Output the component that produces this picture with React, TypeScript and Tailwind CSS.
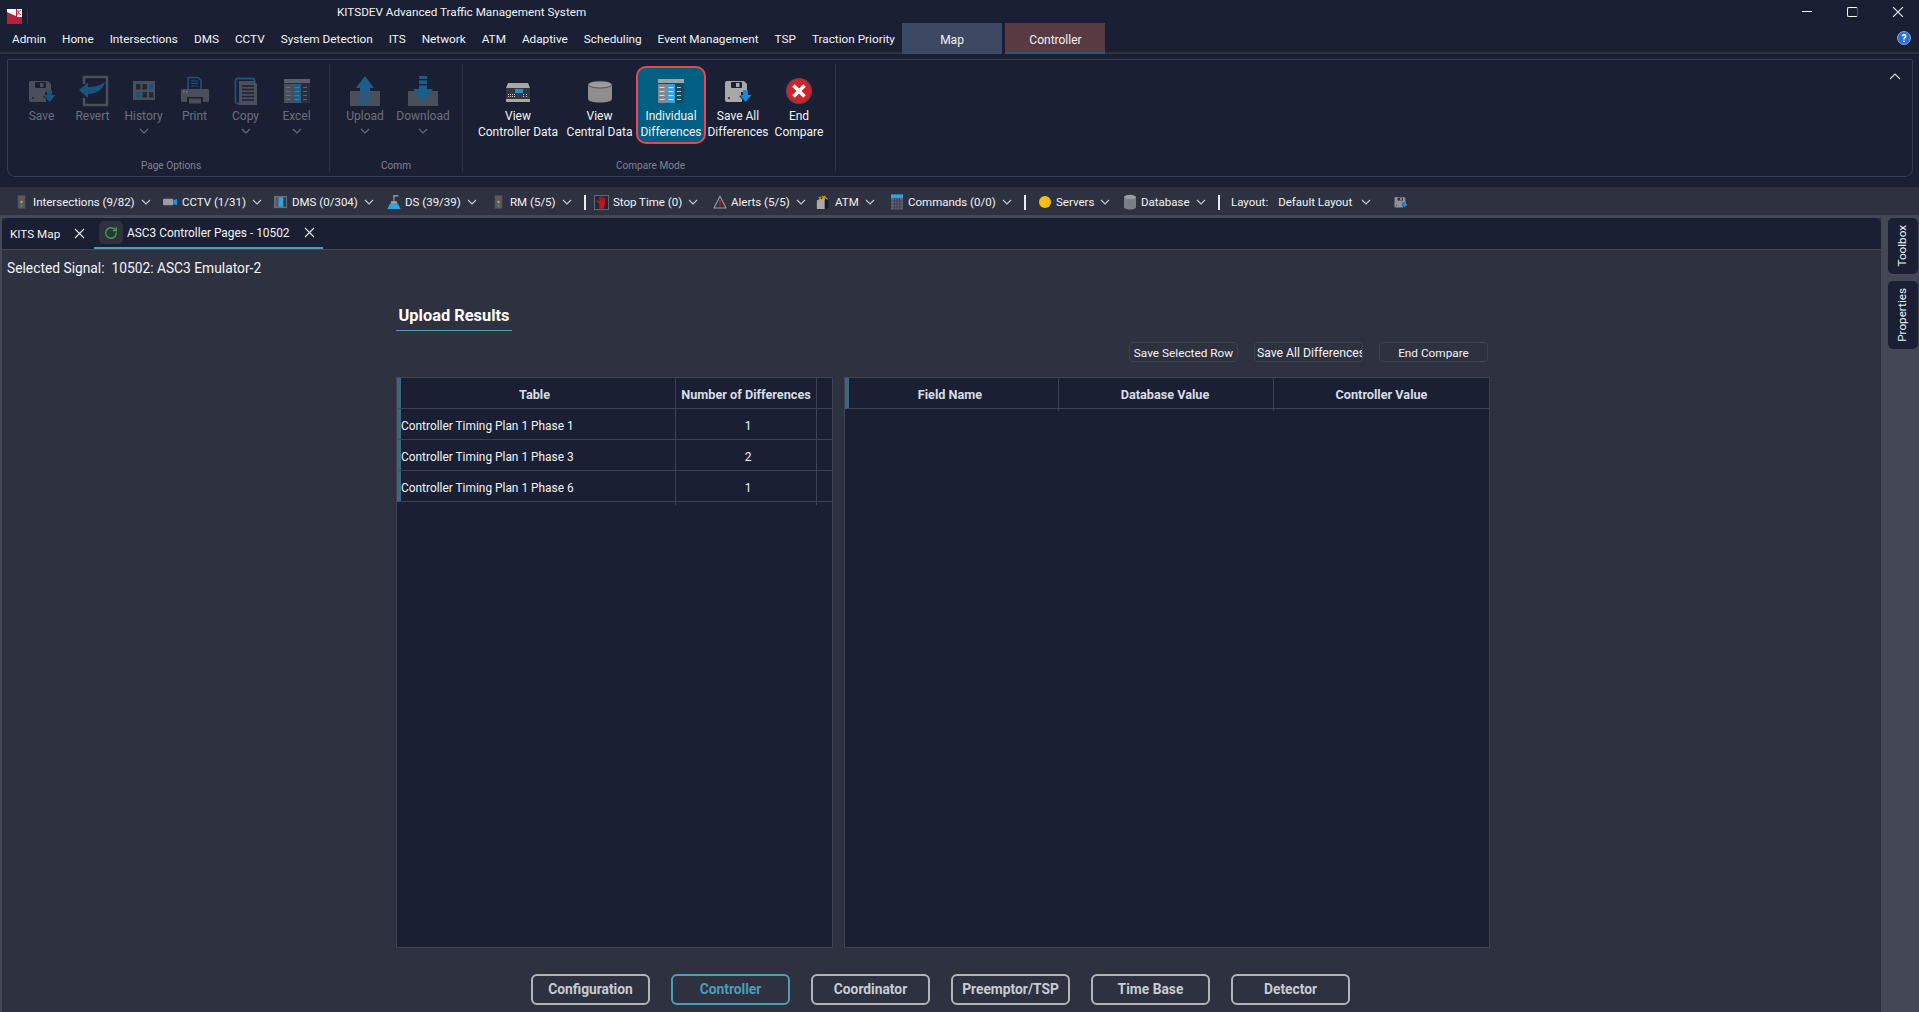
import React from "react";
import { RotateCw } from "lucide-react";

const G = "#4b4e5b";
const B = "#17557f";
const D = "#1a1f33";

function Chev({ color = "#c9ccd4", className = "" }: { color?: string; className?: string }) {
  return (
    <svg width="10" height="6" viewBox="0 0 10 6" className={className}>
      <path d="M1 1l4 4 4-4" fill="none" stroke={color} strokeWidth="1.1" />
    </svg>
  );
}

function Cross({ size = 11 }: { size?: number }) {
  return (
    <svg width={size} height={size} viewBox="0 0 11 11">
      <path d="M1 1l9 9M10 1l-9 9" stroke="#e6e8ee" strokeWidth="1.1" />
    </svg>
  );
}

function Floppy({ body, arrow, slot, size = 32 }: { body: string; arrow: string; slot: string; size?: number }) {
  return (
    <svg width={size} height={size} viewBox="0 0 32 32">
      <path d="M5 6h17l3 3v8h-6v4h-2l3 3v3H5a2 2 0 0 1-2-2V8a2 2 0 0 1 2-2z" fill={body} />
      <rect x="9" y="7" width="11" height="6" rx="1" fill={slot} />
      <rect x="14" y="8" width="3.5" height="4" fill={body} />
      <circle cx="7" cy="23" r="1" fill={slot} />
      <path d="M21 15h5v5h3.5l-6 7-6-7H21z" fill={arrow} />
    </svg>
  );
}

function Revert() {
  return (
    <svg width="32" height="32" viewBox="0 0 32 32">
      <path d="M7 9V2h23v28H7v-7" fill="none" stroke={G} strokeWidth="2.5" />
      <path d="M2 15l9-7.5V12c6 0 12-1 17-5-2 8-9 12-17 12v4z" fill={B} />
    </svg>
  );
}

function History() {
  const cells = [
    ["#23273a", 8, 9],
    ["#23273a", 14.5, 9],
    [B, 21, 9],
    [B, 8, 17],
    ["#23273a", 14.5, 17],
    ["#23273a", 21, 17],
  ] as const;
  return (
    <svg width="32" height="32" viewBox="0 0 32 32">
      <rect x="5" y="6" width="22" height="19" fill={G} />
      {cells.map((c, i) => (
        <rect key={i} x={c[1]} y={c[2]} width="4.5" height="5.5" fill={c[0]} />
      ))}
    </svg>
  );
}

function Print() {
  return (
    <svg width="32" height="32" viewBox="0 0 32 32">
      <path d="M9 14V2.5h10l3 3V14" fill="none" stroke={B} strokeWidth="1.6" />
      <path d="M12 6h7M12 8.5h7M12 11h7" stroke={B} strokeWidth="1.1" />
      <rect x="2" y="14" width="28" height="13" rx="1.5" fill={G} />
      <rect x="8" y="22" width="16" height="8" fill={D} />
      <rect x="10" y="23.5" width="12" height="5" fill={G} />
      <rect x="4" y="16" width="1.5" height="1.5" fill="#7a7d88" />
      <rect x="7" y="16" width="1.5" height="1.5" fill="#7a7d88" />
    </svg>
  );
}

function Copy() {
  return (
    <svg width="32" height="32" viewBox="0 0 32 32">
      <rect x="5.5" y="3.5" width="19" height="25" rx="2" fill="none" stroke={B} strokeWidth="1.8" />
      <path d="M9 6h15l3 3v21H9z" fill={G} />
      <path d="M12 11h12M12 14.5h12M12 18h12M12 21.5h12M12 25h12" stroke={D} strokeWidth="1.3" />
    </svg>
  );
}

function Table({ top, body, mid, right, line }: { top: string; body: string; mid: string; right: string; line: string }) {
  return (
    <svg width="32" height="32" viewBox="0 0 32 32">
      <rect x="3" y="4" width="26" height="4" fill={top} />
      <rect x="3" y="8" width="26" height="1" fill={right} />
      <rect x="3" y="9" width="9" height="19" fill={body} />
      <rect x="12" y="9" width="8" height="19" fill={mid} />
      <rect x="20" y="9" width="9" height="19" fill={right} />
      {[12, 16, 20, 24].map((y) => (
        <g key={y}>
          <rect x="4.5" y={y} width="5" height="1" fill={line} />
          <rect x="13.5" y={y} width="5" height="1.2" fill={line} />
          <rect x="22" y={y} width="4" height="0.8" fill={line} />
        </g>
      ))}
    </svg>
  );
}

function Upload() {
  return (
    <svg width="32" height="32" viewBox="0 0 32 32">
      <rect x="1" y="16" width="30" height="15" fill={G} />
      <path d="M16 1l9 12h-4v15H11V13H7z" fill="#1a5f8c" />
      <rect x="11" y="18" width="10" height="1.3" fill={G} />
      <rect x="11" y="23" width="10" height="1.3" fill={G} />
    </svg>
  );
}

function Download() {
  return (
    <svg width="32" height="32" viewBox="0 0 32 32">
      <rect x="1" y="16" width="30" height="15" fill={G} />
      <path d="M12 1h8v13h6l-10 13L6 14h6z" fill="#1a5f8c" />
      <rect x="12" y="4" width="8" height="1.3" fill={D} />
      <rect x="12" y="9" width="8" height="1.3" fill={D} />
    </svg>
  );
}

function ControllerIcon() {
  return (
    <svg width="32" height="32" viewBox="0 0 32 32">
      <path d="M6 8h20l2 5H4z" fill="#a8a8a8" />
      <rect x="4" y="13" width="24" height="11" fill="#33363f" />
      <rect x="13" y="14" width="8" height="4" fill="#1f8fe0" />
      {[6, 8, 10, 12, 21, 24].map((x) => (
        <g key={x}>
          <rect x={x} y="19" width="1" height="1" fill="#c8c8c8" />
          <rect x={x} y="21" width="1" height="1" fill="#c8c8c8" />
        </g>
      ))}
      <rect x="4" y="24" width="24" height="3" fill="#a8a8a8" />
    </svg>
  );
}

function Cylinder() {
  return (
    <svg width="32" height="32" viewBox="0 0 32 32">
      <path d="M4 10v14c0 2 5 3.5 12 3.5s12-1.5 12-3.5V10z" fill="#8e8e8e" />
      <ellipse cx="16" cy="9.5" rx="12" ry="3.5" fill="#9c9c9c" stroke="#33363f" strokeWidth="0.7" />
    </svg>
  );
}

function EndIcon() {
  return (
    <svg width="32" height="32" viewBox="0 0 32 32">
      <circle cx="16" cy="16" r="12.5" fill="#d3212c" stroke="#4b4e5b" strokeWidth="1.2" />
      <path d="M10.5 10.5l11 11M21.5 10.5l-11 11" stroke="#fff" strokeWidth="3.6" />
    </svg>
  );
}

function Light() {
  return (
    <svg width="16" height="16" viewBox="0 0 16 16">
      <rect x="4" y="1" width="8" height="14" fill="#555864" />
      <circle cx="8" cy="4" r="1.4" fill="#b23a32" />
      <circle cx="8" cy="8" r="1.4" fill="#c9a227" />
      <circle cx="8" cy="12" r="1.4" fill="#3e8e4a" />
    </svg>
  );
}

function Cam() {
  return (
    <svg width="16" height="16" viewBox="0 0 16 16">
      <rect x="0" y="4.5" width="11" height="7" rx="1" fill="#9a9ca3" />
      <path d="M11 6l4-1.5v7L11 10z" fill="#1f8fe0" />
    </svg>
  );
}

function Dms() {
  return (
    <svg width="16" height="16" viewBox="0 0 16 16">
      <rect x="1" y="1.5" width="14" height="13" fill="#6a6d78" />
      <rect x="3" y="3" width="3" height="10" fill="#555864" />
      <rect x="6" y="3" width="5" height="10" fill="#2ba4e6" />
      <rect x="11" y="3" width="3" height="10" fill="#3a3d4a" />
    </svg>
  );
}

function Ds() {
  return (
    <svg width="17" height="17" viewBox="0 0 17 17">
      <path d="M8 1h6M9 1v6" stroke="#a8a8a8" strokeWidth="1.2" fill="none" />
      <path d="M6 7h6l1 3H5z" fill="#a8a8a8" />
      <path d="M4.5 10h9l3 6h-15z" fill="#2ba4e6" />
    </svg>
  );
}

function Hand() {
  return (
    <svg width="17" height="17" viewBox="0 0 17 17">
      <rect x="0.5" y="0.5" width="16" height="16" fill="#23273a" stroke="#6a6d78" />
      <path d="M6 15.5V10L2.5 7l.8-1L6 7.5V2h1.2l.3 5V1h1.2l.3 6 .7-5.5h1.2L10.5 7l1-3.5h1.1L12.5 10 11 15.5z" fill="#c01818" />
    </svg>
  );
}

function Alert() {
  return (
    <svg width="14" height="14" viewBox="0 0 14 14">
      <path d="M7 1.2L13 13H1z" fill="none" stroke="#9a9ca3" strokeWidth="1.1" />
      <path d="M7 5v4.5" stroke="#d3212c" strokeWidth="1.4" />
      <circle cx="7" cy="11" r="0.8" fill="#d3212c" />
    </svg>
  );
}

function Atm() {
  return (
    <svg width="17" height="17" viewBox="0 0 17 17">
      <path d="M1 6l9-2v12H1z" fill="#a8a8a8" />
      <path d="M10 4l4 2v9l-4 1z" fill="#16181f" />
      <path d="M3 2l3 4M6 2L3 6M7 1l3 4M10 1L7 5M10 2l3 3" stroke="#d9a520" strokeWidth="1.2" />
    </svg>
  );
}

function Calc() {
  return (
    <svg width="14" height="16" viewBox="0 0 14 16">
      <rect x="1" y="0.5" width="12" height="15" fill="#5d6070" />
      <rect x="1" y="0.5" width="12" height="3.5" fill="#2ba4e6" />
      <path d="M4.5 4v11.5M7 4v11.5M9.5 4v11.5M1 7h12M1 10h12M1 13h12" stroke="#33363f" strokeWidth="0.6" />
    </svg>
  );
}

function Db() {
  return (
    <svg width="14" height="16" viewBox="0 0 14 16">
      <path d="M1 3v10c0 1.4 2.6 2.5 6 2.5s6-1.1 6-2.5V3z" fill="#7c7e86" />
      <ellipse cx="7" cy="3" rx="6" ry="2.2" fill="#9a9ca3" />
    </svg>
  );
}

function RibbonBtn({ w, icon, lines, off, drop }: { w: string; icon: React.ReactNode; lines: string[]; off?: boolean; drop?: boolean }) {
  return (
    <div className={`${w} flex flex-col items-center pt-[11px]`}>
      {icon}
      <div className={`mt-[0.5px] whitespace-nowrap text-center text-[12px] leading-[16px] ${off ? "text-[#6c6f7b]" : "text-[#f2f3f5]"}`}>
        {lines.map((l) => (
          <div key={l}>{l}</div>
        ))}
      </div>
      {drop && <Chev color="#6c6f7b" className="mt-[4px]" />}
    </div>
  );
}

function Group({ w, label, labelClass = "", children }: { w: string; label: string; labelClass?: string; children: React.ReactNode }) {
  return (
    <div className={`${w} mb-[4px] mt-[4px] flex flex-col border-r border-[#2e3140]`}>
      <div className="flex flex-1">{children}</div>
      <div className={`h-[13px] text-center text-[10.1px] leading-[13px] text-[#80838e] ${labelClass}`}>{label}</div>
    </div>
  );
}

function Tool({ w, icon, text }: { w: string; icon: React.ReactNode; text: string }) {
  return (
    <div className={`${w} flex items-center`}>
      <div className="flex w-[15px] shrink-0 justify-center">{icon}</div>
      <span className="ml-[4px] mt-[2px] whitespace-nowrap">{text}</span>
      <Chev className="ml-[6px] shrink-0" />
    </div>
  );
}

function Sep() {
  return <div className="h-[15px] w-[2px] bg-[#e8eaee]" />;
}

const menu = ["Admin", "Home", "Intersections", "DMS", "CCTV", "System Detection", "ITS", "Network", "ATM", "Adaptive", "Scheduling", "Event Management", "TSP", "Traction Priority"];
const rows: [string, string][] = [
  ["Controller Timing Plan 1 Phase 1", "1"],
  ["Controller Timing Plan 1 Phase 3", "2"],
  ["Controller Timing Plan 1 Phase 6", "1"],
];

export default function App() {
  return (
    <div className="flex h-screen w-full flex-col overflow-hidden bg-[#1a1f33] font-['Roboto',sans-serif] text-[11.7px] text-[#f2f3f5]">
      {/* title bar */}
      <div className="flex h-[23px] shrink-0 items-start">
        <svg width="15" height="15" viewBox="0 0 15 15" className="ml-[7px] mt-[9px]">
          <rect width="15" height="15" fill="#b5213a" />
          <path d="M0 0h9v7L0 3z" fill="#fff" />
          <rect x="10" y="0" width="5" height="8" fill="#fff" />
          <path d="M11 1v5M14 1l-3 2.5L14 6" stroke="#b5213a" strokeWidth="0.9" fill="none" />
        </svg>
        <div className="ml-[5px] mt-[9px] h-[15px] w-px bg-[#2e3140]" />
        <div className="ml-[309px] mt-[3px] leading-[18px]">KITSDEV Advanced Traffic Management System</div>
        <div className="ml-auto flex h-[23px] items-center">
          <div className="mr-[35px] h-px w-[10px] bg-[#f2f3f5]" />
          <div className="mr-[34px] h-[10px] w-[11px] rounded-[2px] border-[1.5px] border-[#f2f3f5] border-r-[#b5213a]" />
          <div className="mr-[15px]">
            <Cross size={12} />
          </div>
        </div>
      </div>
      {/* menu */}
      <div className="flex h-[31px] shrink-0">
        <div className="flex h-[31px] w-[902px] shrink-0 items-center gap-[16px] border-b-2 border-[#2e3140] pl-[12px] pt-[5px] text-[11.77px]">
          {menu.map((m) => (
            <span key={m} className="whitespace-nowrap">{m}</span>
          ))}
        </div>
        <div className="flex h-[31px] w-[100px] items-center justify-center bg-[#3d4962] pt-[3px] text-[12px]">Map</div>
        <div className="ml-[3px] flex h-[31px] w-[100px] items-center justify-center border-b-2 border-[#1f5f74] bg-[#5a3a42] pl-[1px] pt-[4px] text-[12px]">Controller</div>
        <div className="flex h-[31px] flex-1 items-center justify-end border-b-2 border-[#2e3140] pr-[8px]">
          <svg width="14" height="14" viewBox="0 0 14 14">
            <circle cx="7" cy="7" r="6.5" fill="#2d6fd2" stroke="#9fc2ee" strokeWidth="0.8" />
            <text x="7" y="10.5" textAnchor="middle" fontSize="10" fontWeight="700" fill="#fff" fontFamily="Roboto, sans-serif">?</text>
          </svg>
        </div>
      </div>
      {/* ribbon */}
      <div className="h-[133px] shrink-0 pb-[10px] pl-[7px] pr-[6px] pt-[5px]">
        <div className="relative flex h-[118px] rounded-b-[8px] rounded-t-[2px] border border-[#3a3d4e] pl-[8px]">
          <Group w="w-[314px]" label="Page Options" labelClass="pr-[3px]">
            <RibbonBtn w="w-[51px]" off icon={<Floppy body={G} arrow={B} slot={D} />} lines={["Save"]} />
            <RibbonBtn w="w-[51px]" off icon={<Revert />} lines={["Revert"]} />
            <RibbonBtn w="w-[51px]" off drop icon={<History />} lines={["History"]} />
            <RibbonBtn w="w-[51px]" off icon={<Print />} lines={["Print"]} />
            <RibbonBtn w="w-[51px]" off drop icon={<Copy />} lines={["Copy"]} />
            <RibbonBtn w="w-[51px]" off drop icon={<Table top="#5c5f6b" body={G} mid="#1a5f8c" right="#2a2d3c" line="#6c6f7b" />} lines={["Excel"]} />
          </Group>
          <Group w="w-[133px]" label="Comm">
            <div className="w-[10px]" />
            <RibbonBtn w="w-[50px]" off drop icon={<Upload />} lines={["Upload"]} />
            <RibbonBtn w="w-[66px]" off drop icon={<Download />} lines={["Download"]} />
          </Group>
          <Group w="w-[373px]" label="Compare Mode" labelClass="pl-[3px]">
            <div className="w-[10px]" />
            <RibbonBtn w="w-[90px]" icon={<ControllerIcon />} lines={["View", "Controller Data"]} />
            <RibbonBtn w="w-[73px]" icon={<Cylinder />} lines={["View", "Central Data"]} />
            <div className="w-[70px]">
              <div className="mt-[2px] flex h-[78px] w-[70px] flex-col items-center rounded-[10px] border-[2px] border-[#ef4450] bg-[#005f83] pt-[7px]">
                <Table top="#9fa3a8" body="#7f8a92" mid="#2ba4e6" right="#184a5f" line="#d5dde2" />
                <div className="mt-[0.5px] whitespace-nowrap text-center text-[12px] leading-[16px]">
                  <div>Individual</div>
                  <div>Differences</div>
                </div>
              </div>
            </div>
            <RibbonBtn w="w-[64px]" icon={<Floppy body="#a8a8a8" arrow="#0f8fd6" slot={D} />} lines={["Save All", "Differences"]} />
            <RibbonBtn w="w-[58px]" icon={<EndIcon />} lines={["End", "Compare"]} />
          </Group>
          <svg width="12" height="7" viewBox="0 0 12 7" className="absolute right-[11px] top-[13px]">
            <path d="M1 6l5-5 5 5" fill="none" stroke="#d8dae0" strokeWidth="1.1" />
          </svg>
        </div>
      </div>
      {/* toolbar */}
      <div className="flex h-[31px] shrink-0 items-center border-b-[3px] border-[#444756] bg-[#2e3140] pl-[14px] pt-[2px] text-[11.5px]">
        <Tool w="w-[149px]" icon={<Light />} text="Intersections (9/82)" />
        <Tool w="w-[110px]" icon={<Cam />} text="CCTV (1/31)" />
        <Tool w="w-[113px]" icon={<Dms />} text="DMS (0/304)" />
        <Tool w="w-[105px]" icon={<Ds />} text="DS (39/39)" />
        <Tool w="w-[93px]" icon={<Light />} text="RM (5/5)" />
        <Sep />
        <div className="w-[8px]" />
        <Tool w="w-[118px]" icon={<Hand />} text="Stop Time (0)" />
        <Tool w="w-[104px]" icon={<Alert />} text="Alerts (5/5)" />
        <Tool w="w-[73px]" icon={<Atm />} text="ATM" />
        <Tool w="w-[135px]" icon={<Calc />} text="Commands (0/0)" />
        <Sep />
        <div className="w-[11px]" />
        <Tool w="w-[85px]" icon={<div className="h-[12px] w-[12px] rounded-full bg-[#f2c015]" />} text="Servers" />
        <Tool w="w-[96px]" icon={<Db />} text="Database" />
        <Sep />
        <span className="ml-[11px] mt-[2px] whitespace-nowrap">Layout:</span>
        <span className="ml-[10px] mt-[2px] whitespace-nowrap">Default Layout</span>
        <Chev className="ml-[9px]" />
        <div className="ml-[22px]">
          <Floppy body="#8e9098" arrow="#1f8fe0" slot="#2e3140" size={16} />
        </div>
      </div>
      {/* main */}
      <div className="flex min-h-0 flex-1 bg-[#444756]">
        <div className="ml-[2px] flex min-w-0 flex-1 flex-col bg-[#2e3140]">
          <div className="flex h-[32px] shrink-0 rounded-t-[6px] border-b border-[#444756] bg-[#1a1f33]">
            <div className="flex w-[92px] items-center pl-[8px] pt-[3px]">
              <span className="whitespace-nowrap">KITS Map</span>
              <span className="-mt-[3px] ml-[14px]"><Cross /></span>
            </div>
            <div className="flex h-[31px] w-[229px] items-start border-b-[2px] border-[#4e9db8] pl-[5px] pt-[3px]">
              <div className="flex h-[23px] w-[24px] items-center justify-center rounded-[5px] bg-[#2e3140]">
                <RotateCw size={14} color="#3fae3f" strokeWidth={2.2} />
              </div>
              <span className="ml-[4px] mt-[1px] whitespace-nowrap text-[11.9px] leading-[23px]">ASC3 Controller Pages - 10502</span>
              <span className="ml-[14px] mt-[6px]"><Cross /></span>
            </div>
          </div>
          <div className="flex min-h-0 flex-1 flex-col overflow-hidden">
            <div className="mt-[9px] h-[18px] whitespace-nowrap pl-[5px] text-[13.8px] leading-[18px]">Selected Signal:&nbsp; 10502: ASC3 Emulator-2</div>
            <div className="ml-[394px] flex w-[1095px] flex-col">
              <div className="mt-[25px] h-[29px] w-[116px] whitespace-nowrap border-b border-[#4e9db8] text-center text-[16.4px] font-bold leading-[28px] text-white">Upload Results</div>
              <div className="mt-[11px] flex h-[20px] justify-end gap-[16px] pr-[3px]">
                <div className="w-[109px] overflow-hidden whitespace-nowrap rounded-[4px] border border-[#3f4252] text-center text-[11.8px] leading-[20px]">Save Selected Row</div>
                <div className="w-[109px] overflow-hidden whitespace-nowrap rounded-[4px] border border-[#3f4252] pl-[2px] text-[12.2px] leading-[20px]">Save All Differences</div>
                <div className="w-[109px] overflow-hidden whitespace-nowrap rounded-[4px] border border-[#3f4252] text-center text-[11.8px] leading-[20px]">End Compare</div>
              </div>
              <div className="mt-[15px] flex h-[571px] gap-[11px]">
                <div className="w-[437px] border border-[#3f4252] bg-[#1a1f33]">
                  <div className="grid h-[31px] grid-cols-[275px_141px_1fr] border-b border-l-4 border-[#3f4252] border-l-[#3d6680] text-[12.7px] font-bold leading-[33px] text-[#d8dde6]">
                    <div className="border-r border-[#3f4252] pr-[7px] text-center">Table</div>
                    <div className="whitespace-nowrap border-r border-[#3f4252] text-center">Number of Differences</div>
                    <div />
                  </div>
                  {rows.map(([a, b]) => (
                    <div key={a} className="grid h-[31px] grid-cols-[275px_141px_1fr] border-b border-l-4 border-[#3f4252] border-l-[#3d6680] text-[11.9px] leading-[34px]">
                      <div className="whitespace-nowrap border-r border-[#3f4252]">{a}</div>
                      <div className="border-r border-[#3f4252] pl-[4px] text-center">{b}</div>
                      <div />
                    </div>
                  ))}
                </div>
                <div className="w-[646px] border border-[#3f4252] bg-[#1a1f33]">
                  <div className="grid h-[31px] grid-cols-[210px_215px_1fr] border-b border-l-4 border-[#3f4252] border-l-[#3d6680] text-center text-[12.7px] font-bold leading-[33px] text-[#d8dde6]">
                    <div className="border-r border-[#3f4252] pr-[7px]">Field Name</div>
                    <div className="border-r border-[#3f4252] pr-[2px]">Database Value</div>
                    <div>Controller Value</div>
                  </div>
                </div>
              </div>
              <div className="mt-[26px] flex gap-[21px] pl-[135px]">
                {["Configuration", "Controller", "Coordinator", "Preemptor/TSP", "Time Base", "Detector"].map((t) => (
                  <div
                    key={t}
                    className={
                      t === "Controller"
                        ? "h-[31px] w-[119px] rounded-[6px] border-2 border-[#4e9db8] text-center text-[13.8px] font-bold leading-[27px] text-[#4e9db8]"
                        : "h-[31px] w-[119px] rounded-[6px] border-2 border-[#b4b4b4] text-center text-[13.8px] font-bold leading-[27px] text-[#c8ccd2]"
                    }
                  >
                    {t}
                  </div>
                ))}
              </div>
            </div>
          </div>
        </div>
        <div className="flex w-[38px] shrink-0 flex-col gap-[7px] pl-[7px] pr-px">
          <div className="flex h-[56px] items-center justify-center rounded-[5px] bg-[#1a1f33]">
            <span className="rotate-180 [writing-mode:vertical-rl]">Toolbox</span>
          </div>
          <div className="flex h-[68px] items-center justify-center rounded-[5px] bg-[#1a1f33]">
            <span className="rotate-180 [writing-mode:vertical-rl]">Properties</span>
          </div>
        </div>
      </div>
    </div>
  );
}
